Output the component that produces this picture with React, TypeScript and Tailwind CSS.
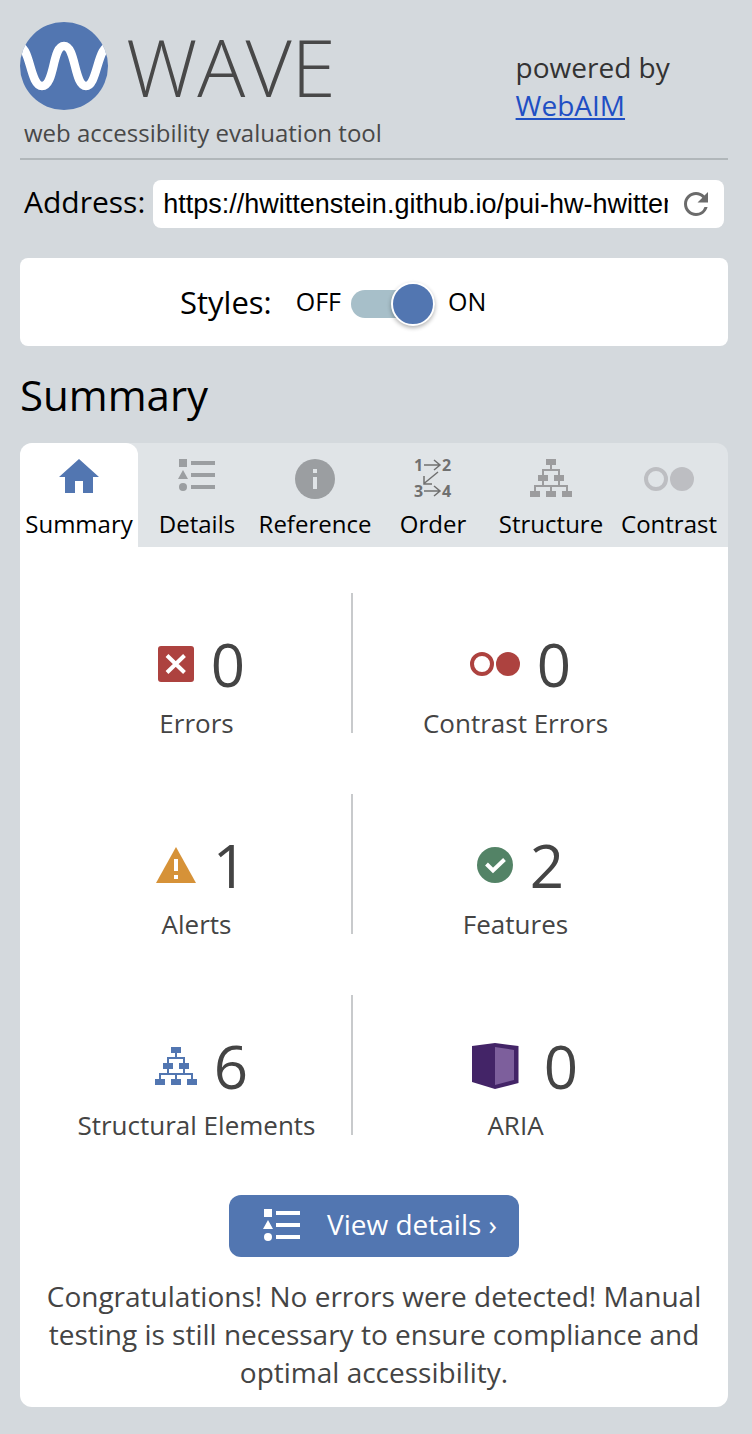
import { useState, type ReactNode } from "react";
import { MdRefresh } from "react-icons/md";

function LogoMark() {
  return (
    <svg viewBox="0 0 88 88" className="size-22 shrink-0" aria-hidden="true">
      <defs>
        <clipPath id="logo-disc">
          <circle cx="44" cy="44" r="44" />
        </clipPath>
      </defs>
      <circle cx="44" cy="44" r="44" fill="#5276b1" />
      <path
        clipPath="url(#logo-disc)"
        d="M-4 24C11 20 9 64 22 64S32 24 44 24 54 64 66 64 77 20 92 24"
        fill="none"
        stroke="#fff"
        strokeWidth="8.500"
      />
    </svg>
  );
}

function HomeIcon() {
  return (
    <svg viewBox="0 0 40 34" className="h-[34px] w-10" fill="#5276b1" aria-hidden="true">
      <path d="M20 0 40 18H34V34H24V22H16V34H6V18H0Z" />
    </svg>
  );
}

function ListIcon() {
  return (
    <svg viewBox="0 0 38 32" className="h-8 w-[38px]" fill="currentColor" aria-hidden="true">
      <path d="M1 0H9V8H1ZM5 11 10 20H0ZM13 2H37V6H13ZM13 14H37V18H13ZM13 26H37V30H13Z" />
      <circle cx="5" cy="28" r="4" />
    </svg>
  );
}

function InfoIcon() {
  return (
    <svg viewBox="0 0 40 40" className="size-10" aria-hidden="true">
      <circle cx="20" cy="20" r="20" fill="#9b9ea1" />
      <path d="M18 10H22V14H18ZM18 18H22V30H18Z" fill="#e0e4e7" />
    </svg>
  );
}

function OrderIcon() {
  return (
    <svg viewBox="-2 -8 42 54" className="-mt-2 h-[54px] w-[42px] overflow-visible" aria-hidden="true">
      <g fill="#707070" fontFamily="'Open Sans', sans-serif" fontSize="16" fontWeight="700">
        <text x="0" y="12">1</text>
        <text x="28" y="12">2</text>
        <text x="0" y="38">3</text>
        <text x="28" y="38">4</text>
      </g>
      <path
        d="M10 6H26M20 1 26 6 20 11M10 32H26M20 27 26 32 20 37M24 13 10 24.500M10 17V25H18"
        fill="none"
        stroke="#707070"
        strokeWidth="1.500"
      />
    </svg>
  );
}

function TreeIcon() {
  return (
    <svg viewBox="0 0 42 38" className="h-[38px] w-[42px]" fill="currentColor" aria-hidden="true">
      <path d="M16 0H26V6H16ZM8 16H18V22H8ZM24 16H34V22H24ZM0 32H10V38H0ZM16 32H26V38H16ZM32 32H42V38H32Z" />
      <path
        d="M21 6V11M13 16V11H29V16M13 22V27M29 22V27M5 32V27H37V32M21 27V32"
        fill="none"
        stroke="currentColor"
        strokeWidth="2"
      />
    </svg>
  );
}

function ContrastIcon() {
  return (
    <svg viewBox="0 0 50 24" className="h-6 w-[50px]" aria-hidden="true">
      <circle cx="12" cy="12" r="10" fill="none" stroke="currentColor" strokeWidth="4" />
      <circle cx="38" cy="12" r="12" fill="currentColor" />
    </svg>
  );
}

function ErrorIcon() {
  return (
    <svg viewBox="0 0 36 36" className="size-9" aria-hidden="true">
      <rect width="36" height="36" rx="3" fill="#ad423f" />
      <path d="M9 9.500 26.500 26.500M26.500 9.500 9 26.500" stroke="#fff" strokeWidth="4" />
    </svg>
  );
}

function AlertIcon() {
  return (
    <svg viewBox="0 0 40 36" className="h-9 w-10" aria-hidden="true">
      <path d="M20 0 40 36H0Z" fill="#d69238" />
      <path d="M18 12H22V24H18ZM18 28H22V32H18Z" fill="#fff" />
    </svg>
  );
}

function FeatureIcon() {
  return (
    <svg viewBox="0 0 36 36" className="size-9" aria-hidden="true">
      <circle cx="18" cy="18" r="18" fill="#538366" />
      <path d="M9.500 17 16 23.500 27.500 12.500" fill="none" stroke="#fff" strokeWidth="4" />
    </svg>
  );
}

function AriaIcon() {
  return (
    <svg viewBox="0 0 64 46" className="h-[46px] w-16" aria-hidden="true">
      <path d="M9 3 32 0 55.500 3V40L32 46 9 39Z" fill="#432467" />
      <path d="M32 4 51 7V37L32 42Z" fill="#7d5f9c" />
    </svg>
  );
}

const tabs: { label: string; icon: ReactNode }[] = [
  { label: "Summary", icon: <HomeIcon /> },
  { label: "Details", icon: <span className="text-[#9b9ea1]"><ListIcon /></span> },
  { label: "Reference", icon: <InfoIcon /> },
  { label: "Order", icon: <OrderIcon /> },
  { label: "Structure", icon: <span className="text-[#9c9c9e]"><TreeIcon /></span> },
  { label: "Contrast", icon: <span className="self-center text-[#bdbec2]"><ContrastIcon /></span> },
];

const stats: { label: string; value: number; icon: ReactNode }[] = [
  { label: "Errors", value: 0, icon: <ErrorIcon /> },
  { label: "Contrast Errors", value: 0, icon: <span className="text-[#ad423f]"><ContrastIcon /></span> },
  { label: "Alerts", value: 1, icon: <AlertIcon /> },
  { label: "Features", value: 2, icon: <FeatureIcon /> },
  { label: "Structural Elements", value: 6, icon: <span className="text-[#5276b1]"><TreeIcon /></span> },
  { label: "ARIA", value: 0, icon: <AriaIcon /> },
];

export default function App() {
  const [address, setAddress] = useState(
    "https://hwittenstein.github.io/pui-hw-hwittenstein/",
  );
  const [styles, setStyles] = useState(true);
  const [active, setActive] = useState("Summary");

  return (
    <div className="min-h-screen bg-[#d4d9dd] pt-[22px] pr-6 pb-7 pl-5 font-['Open_Sans',sans-serif] text-black [&_svg]:block">
      <header className="flex border-b-2 border-[#b1b7ba] pb-2">
        <div className="w-[70%] text-[#484848]">
          <div className="flex items-center gap-[18px]">
            <LogoMark />
            <h1 className="text-[80px] leading-[88px] font-[340]">WAVE</h1>
          </div>
          <p className="pt-1.5 pl-1 text-2xl leading-[34px] whitespace-nowrap">web accessibility evaluation tool</p>
        </div>
        <p className="pt-[26px] text-[28px] leading-[38px] text-[#333]">
          powered by
          <br />
          <a href="https://webaim.org/" className="text-[#1f4fc4] underline">WebAIM</a>
        </p>
      </header>

      <form className="mt-5 flex items-center pr-1 pl-1" onSubmit={(e) => e.preventDefault()}>
        <label htmlFor="address" className="pr-2 pb-1 text-[30px] leading-[44px]">Address:</label>
        <div className="flex h-12 min-w-0 flex-1 items-center rounded-lg bg-white pr-2.5 pl-2.5">
          <input
            id="address"
            value={address}
            onChange={(e) => setAddress(e.target.value)}
            className="min-w-0 flex-1 bg-transparent font-['Liberation_Sans',sans-serif] text-[27px] outline-none"
          />
          <button type="submit" aria-label="Reload" className="ml-2.5 text-[#6b6b6b]">
            <MdRefresh size={36} />
          </button>
        </div>
      </form>

      <section className="mt-[30px] flex h-22 items-center rounded-lg bg-white pt-1 pl-[160px]">
        <span className="pr-6 pb-1 text-[31px]">Styles:</span>
        <label className="flex items-center text-[25px]">
          <span className="pb-1">OFF</span>
          <input
            type="checkbox"
            role="switch"
            checked={styles}
            onChange={(e) => setStyles(e.target.checked)}
            className="sr-only"
          />
          <span className={`mr-[13px] ml-2.5 flex h-7 w-[84px] items-center rounded-full bg-[#a7bfc9] ${styles ? "justify-end" : "justify-start"}`}>
            <span className="size-11 rounded-full border-2 border-white bg-[#5276b1] shadow-[0_2px_4px_rgba(0,0,0,0.3)]" />
          </span>
          <span className="pb-1">ON</span>
        </label>
      </section>

      <h2 className="mt-[19px] mb-[18px] text-[42px] leading-[60px]">Summary</h2>

      <main>
        <nav className="grid grid-cols-6 rounded-t-xl bg-[#e0e4e7]">
          {tabs.map((tab) => (
            <button
              key={tab.label}
              type="button"
              onClick={() => setActive(tab.label)}
              className={`flex h-[104px] flex-col items-center rounded-t-xl pt-4 ${active === tab.label ? "bg-white" : ""}`}
            >
              <span className="flex h-10 items-start">{tab.icon}</span>
              <span className="mt-2 text-2xl leading-[34px]">{tab.label}</span>
            </button>
          ))}
        </nav>

        <section className="rounded-b-xl bg-white pt-[46px] pb-4 text-[#444]">
          <ul className="grid grid-cols-[311fr_325fr] gap-y-[61px] pr-[50px] pl-[22px]">
            {stats.map((stat) => (
              <li
                key={stat.label}
                className="flex h-[140px] flex-col items-center border-[#c8cacc] pt-[35px] odd:border-r-2"
              >
                <div className="flex h-[72px] items-center gap-[17px] pl-2.5">
                  {stat.icon}
                  <span className="text-[60px] leading-[72px]">{stat.value}</span>
                </div>
                <span className="mt-1 text-[26px] leading-[38px]">{stat.label}</span>
              </li>
            ))}
          </ul>

          <button
            type="button"
            onClick={() => setActive("Details")}
            className="mx-auto mt-[60px] flex h-[62px] items-center rounded-xl bg-[#5276b1] pr-[22px] pb-0.5 pl-[34px] text-[28px] text-white"
          >
            <ListIcon />
            <span className="ml-[26px] pb-0.5">View details ›</span>
          </button>

          <p className="mt-5 px-5 text-center text-[28px] leading-[38px]">
            Congratulations! No errors were detected! Manual testing is still necessary to ensure
            compliance and optimal accessibility.
          </p>
        </section>
      </main>
    </div>
  );
}
